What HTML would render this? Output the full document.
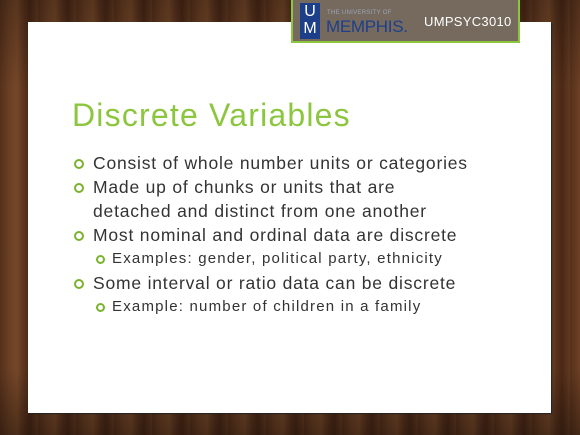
<!DOCTYPE html>
<html><head><meta charset="utf-8"><style>
html,body{margin:0;padding:0}
body{width:580px;height:435px;overflow:hidden;position:relative;font-family:"Liberation Sans",sans-serif;
background:repeating-linear-gradient(90deg,#55301b 0px,#6a3f24 9px,#744728 17px,#5a331d 24px,#4a2816 30px,#633a21 38px);}
.wood{position:absolute;inset:0;background:linear-gradient(180deg,rgba(0,0,0,0.25) 0%,rgba(0,0,0,0) 20%,rgba(0,0,0,0) 85%,rgba(0,0,0,0.35) 100%);}
.slide{position:absolute;left:28px;top:22px;width:523px;height:391px;background:#fff;box-shadow:1px 1px 1px #222;}
.logo{position:absolute;left:291px;top:0;width:229px;height:43px;background:#766a5e;border:2px solid #8cc63f;border-top:none;box-sizing:border-box;}
.um{position:absolute;left:7px;top:3px;width:20px;height:36px;background:#1d3f8a;color:#fff;font-size:16px;line-height:17px;text-align:center;}
.tuo{position:absolute;left:34px;top:10px;font-size:6px;color:#9aa4b8;letter-spacing:.3px}
.mem{position:absolute;left:33px;top:17px;font-size:17px;color:#1d3f8a;letter-spacing:-.3px}
.code{position:absolute;left:131px;top:14px;font-size:13px;color:#fff;letter-spacing:.3px}
h1{position:absolute;left:72px;top:97px;margin:0;font-weight:normal;font-size:32px;color:#8cc63f;letter-spacing:1.2px}
.b{position:absolute;font-size:17.5px;color:#333;white-space:nowrap;letter-spacing:.8px}
.b.bl::before{content:"";position:absolute;left:-19px;top:6px;width:6px;height:6px;border:2.5px solid #7ab32e;border-radius:50%}
.s{position:absolute;font-size:15px;color:#333;white-space:nowrap;letter-spacing:1.2px}
.s::before{content:"";position:absolute;left:-16px;top:5px;width:5px;height:5px;border:2px solid #7ab32e;border-radius:50%}
</style></head><body>
<div class="wood"></div>
<div class="slide"></div>
<div class="logo"><div class="um">U<br>M</div><div class="tuo">THE UNIVERSITY OF</div><div class="mem">MEMPHIS.</div><div class="code">UMPSYC3010</div></div>
<h1>Discrete Variables</h1>
<div class="b bl" style="left:93px;top:153px">Consist of whole number units or categories</div>
<div class="b bl" style="left:93px;top:177px">Made up of chunks or units that are</div>
<div class="b" style="left:93px;top:201px">detached and distinct from one another</div>
<div class="b bl" style="left:93px;top:225px">Most nominal and ordinal data are discrete</div>
<div class="s" style="left:112px;top:250px">Examples: gender, political party, ethnicity</div>
<div class="b bl" style="left:93px;top:273px">Some interval or ratio data can be discrete</div>
<div class="s" style="left:112px;top:298px">Example: number of children in a family</div>
</body></html>
